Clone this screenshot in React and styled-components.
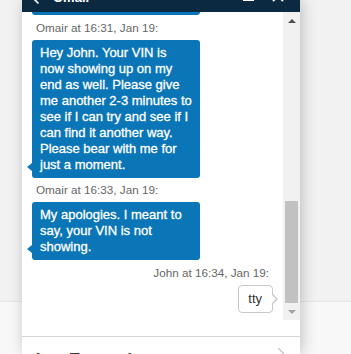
import React from 'react';
import styled, { createGlobalStyle } from 'styled-components';
import { ChevronLeft } from 'lucide-react';

const GlobalStyle = createGlobalStyle`
  html, body {
    margin: 0;
    padding: 0;
  }
  body {
    background: linear-gradient(#f2f2f2 0, #f2f2f2 301px, #e6e6e6 301px, #e6e6e6 302px, #f8f8f8 302px);
    font-family: "Liberation Sans", Arial, sans-serif;
  }
`;

const Page = styled.div`
  height: 354px;
  overflow: hidden;
  padding-left: 22px;
  display: flex;
`;

const Panel = styled.div`
  width: 278px;
  height: 100%;
  background: #fff;
  display: flex;
  flex-direction: column;
  box-shadow: 2px 0 14px rgba(0, 0, 0, 0.22);
`;

const Header = styled.div`
  height: 12px;
  flex: none;
  background: #0c2942;
  color: #fff;
  display: flex;
  align-items: flex-end;
  overflow: hidden;
  padding: 0 16px 0 6px;
`;

const Back = styled(ChevronLeft)`
  flex: none;
  margin-bottom: 5px;
`;

const Title = styled.div`
  font-size: 13px;
  line-height: 13px;
  font-weight: bold;
  margin: 0 0 8px 9px;
`;

const HeadIcon = styled.svg`
  flex: none;
  margin-bottom: ${(p) => p.$drop}px;
  margin-left: ${(p) => p.$gap};
`;

const Body = styled.div`
  flex: none;
  height: 308px;
  display: flex;
`;

const Messages = styled.div`
  flex: 1;
  min-width: 0;
  display: flex;
  flex-direction: column;
  justify-content: flex-end;
  overflow: hidden;
  padding: 0 10px 7px 10px;
`;

const Group = styled.div`
  display: flex;
  flex-direction: column;
  align-items: ${(p) => (p.$mine ? 'flex-end' : 'flex-start')};
  margin-top: ${(p) => p.$gap ?? 5}px;
  flex: none;
`;

const Stamp = styled.div`
  font-size: 11.7px;
  line-height: 14px;
  color: #666;
  padding: 0 4px;
  margin-bottom: 5px;
`;

const Bubble = styled.div`
  position: relative;
  width: 168px;
  box-sizing: border-box;
  padding: 5px 8px 5px 8px;
  background: #0b76b7;
  color: #fff;
  font-size: 13px;
  line-height: 16px;
  border-radius: 3px;
  -webkit-text-stroke: 0.3px #fff;

  &::before {
    content: '';
    position: absolute;
    left: -5px;
    bottom: 7px;
    border-style: solid;
    border-width: 4px 5px 4px 0;
    border-color: transparent #0b76b7 transparent transparent;
  }
`;

const MyBubble = styled.div`
  position: relative;
  box-sizing: border-box;
  padding: 5px 10px 5px 9px;
  background: #fff;
  color: #333;
  font-size: 13px;
  line-height: 16px;
  border: 1px solid #c8c8c8;
  border-radius: 4px;

  &::before,
  &::after {
    content: '';
    position: absolute;
    top: 50%;
    margin-top: -5px;
    border-style: solid;
    border-width: 5px 0 5px 5px;
  }
  &::before {
    right: -6px;
    border-color: transparent transparent transparent #c8c8c8;
  }
  &::after {
    right: -4px;
    border-color: transparent transparent transparent #fff;
  }
`;

const Scrollbar = styled.div`
  width: 17px;
  flex: none;
  background: #f1f1f1;
  display: flex;
  flex-direction: column;
`;

const Arrow = styled.div`
  height: 17px;
  flex: none;
  display: flex;
  align-items: center;
  justify-content: center;

  &::before {
    content: '';
    border-style: solid;
    border-width: ${(p) => (p.$down ? '4px 4px 0 4px' : '0 4px 4px 4px')};
    border-color: ${(p) =>
      p.$down
        ? '#a3a3a3 transparent transparent transparent'
        : 'transparent transparent #505050 transparent'};
  }
`;

const Track = styled.div`
  flex: 1;
  display: flex;
  flex-direction: column;
  justify-content: flex-end;
`;

const Thumb = styled.div`
  height: 102px;
  margin: 0 2px;
  background: #c1c1c1;
`;

const Status = styled.div`
  height: 16px;
  flex: none;
`;

const Composer = styled.div`
  flex: 1;
  border-top: 1px solid #d6d6d6;
  display: flex;
  align-items: flex-start;
  padding: 14px 14px 0 14px;
`;

const Prompt = styled.div`
  font-size: 16px;
  line-height: 18px;
  font-weight: bold;
  color: #333;
`;

const Grip = styled.svg`
  margin-left: auto;
  margin-top: -3px;
  flex: none;
`;

const App = () => {
  return (
    <>
      <GlobalStyle />
      <Page>
        <Panel>
          <Header>
            <Back size={16} strokeWidth={2.5} />
            <Title>Omair</Title>
            <HeadIcon width="12" height="12" viewBox="0 0 12 12" $drop={9} $gap="auto">
              <rect x="0" y="8" width="11" height="2" fill="#fff" />
            </HeadIcon>
            <HeadIcon width="12" height="12" viewBox="0 0 12 12" $drop={10} $gap="17px">
              <path d="M1 1 11 11M11 1 1 11" stroke="#fff" strokeWidth="2" />
            </HeadIcon>
          </Header>
          <Body>
            <Messages>
              <Group>
                <Bubble>
                  Thank you for your patience. I am checking the details on
                  the vehicle for you right now.
                </Bubble>
              </Group>
              <Group $gap={6}>
                <Stamp>Omair at 16:31, Jan 19:</Stamp>
                <Bubble>
                  Hey John. Your VIN is now showing up on my end as well. Please
                  give me another 2-3 minutes to see if I can try and see if I
                  can find it another way. Please bear with me for just a
                  moment.
                </Bubble>
              </Group>
              <Group>
                <Stamp>Omair at 16:33, Jan 19:</Stamp>
                <Bubble>My apologies. I meant to say, your VIN is not showing.</Bubble>
              </Group>
              <Group $mine $gap={6}>
                <Stamp>John at 16:34, Jan 19:</Stamp>
                <MyBubble>tty</MyBubble>
              </Group>
            </Messages>
            <Scrollbar>
              <Arrow />
              <Track>
                <Thumb />
              </Track>
              <Arrow $down />
            </Scrollbar>
          </Body>
          <Status />
          <Composer>
            <Prompt>Log Transcript</Prompt>
            <Grip width="8" height="8" viewBox="0 0 8 8">
              <path d="M0 0 6 6" stroke="#bdbdbd" strokeWidth="1.2" />
            </Grip>
          </Composer>
        </Panel>
      </Page>
    </>
  );
};

export default App;
